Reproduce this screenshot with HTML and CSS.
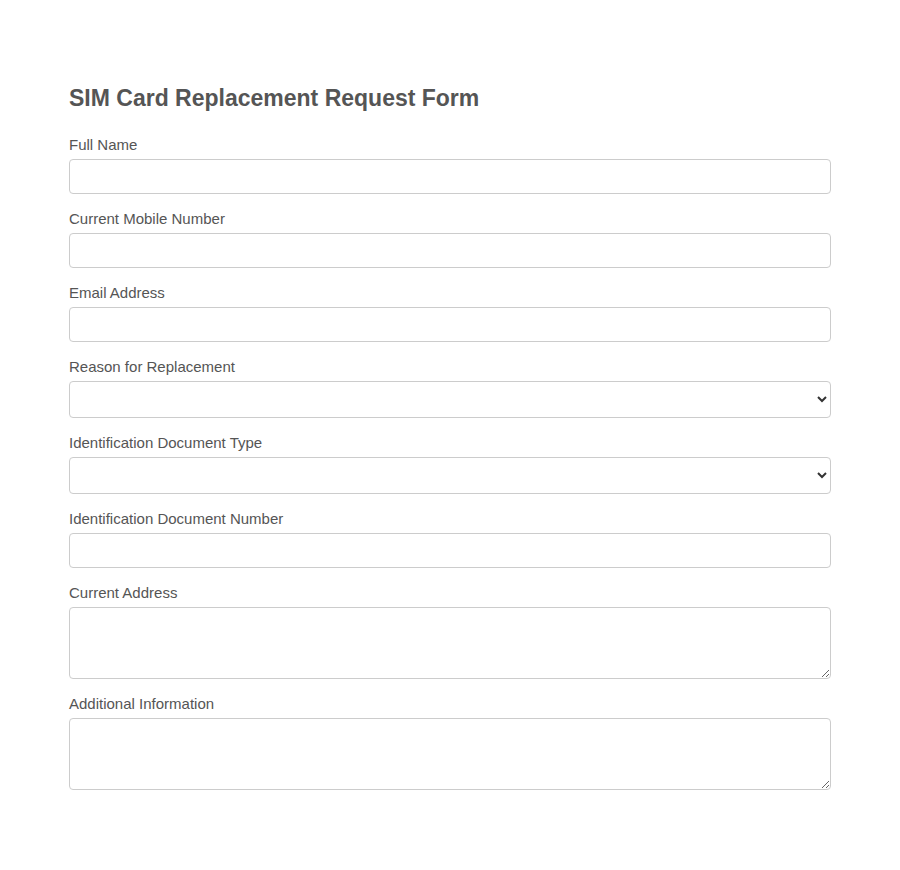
FILE: index.html
```html
<!DOCTYPE html>
<html lang="en">
<head>
<meta charset="utf-8">
<title>SIM Card Replacement Request Form</title>
<link rel="stylesheet" href="styles.css">
</head>
<body>
<main class="container">
  <h2 class="title">SIM Card Replacement Request Form</h2>
  <form class="form">
    <div class="field">
      <label class="label" for="name">Full Name</label>
      <input class="control" id="name" type="text">
    </div>
    <div class="field">
      <label class="label" for="mobile">Current Mobile Number</label>
      <input class="control" id="mobile" type="tel">
    </div>
    <div class="field">
      <label class="label" for="email">Email Address</label>
      <input class="control" id="email" type="email">
    </div>
    <div class="field">
      <label class="label" for="reason">Reason for Replacement</label>
      <select class="control select" id="reason"><option></option></select>
    </div>
    <div class="field">
      <label class="label" for="idtype">Identification Document Type</label>
      <select class="control select" id="idtype"><option></option></select>
    </div>
    <div class="field">
      <label class="label" for="idnum">Identification Document Number</label>
      <input class="control" id="idnum" type="text">
    </div>
    <div class="field">
      <label class="label" for="address">Current Address</label>
      <textarea class="control area" id="address"></textarea>
    </div>
    <div class="field">
      <label class="label" for="info">Additional Information</label>
      <textarea class="control area" id="info"></textarea>
    </div>
  </form>
</main>
</body>
</html>
```
FILE: styles.css
```css
* { box-sizing: border-box; }
html, body { margin: 0; background: #fff; }
body {
  font-family: "Liberation Sans", Arial, sans-serif;
  color: #555;
}
.container {
  width: 762px;
  margin: 0 auto;
  padding-top: 84px;
}
.title {
  margin: 0 0 23px;
  font-size: 23px;
  line-height: 28px;
  font-weight: bold;
  color: #555;
}
.form { display: flex; flex-direction: column; gap: 15px; }
.field { display: flex; flex-direction: column; }
.label {
  font-size: 15px;
  line-height: 18px;
  padding-top: 1px;
  margin-bottom: 5px;
  color: #555;
}
.control {
  width: 100%;
  height: 35px;
  margin: 0;
  padding: 8px;
  border: 1px solid #ccc;
  border-radius: 4px;
  background: #fff;
  font-family: inherit;
  font-size: 15px;
  color: #333;
}
.select { height: 37px; }
.area { height: 72px; resize: vertical; display: block; }
```
